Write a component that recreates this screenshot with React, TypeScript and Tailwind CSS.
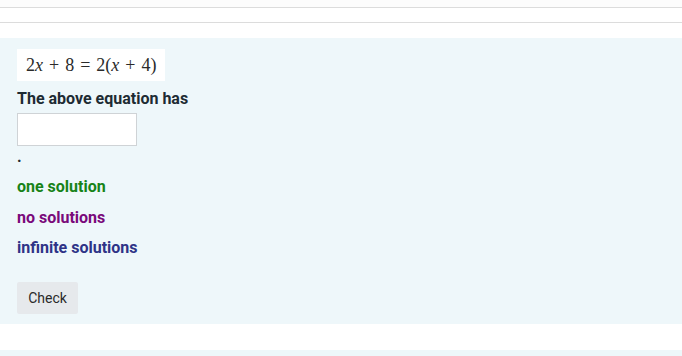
export default function App() {
  const op = "mx-[6px]";
  return (
    <div className="w-[682px] h-[356px] overflow-hidden bg-white" style={{ fontFamily: "Roboto, 'Liberation Sans', sans-serif" }}>
      <div className="h-[7px] bg-[#fcfcfc]" />
      <div className="h-px bg-[#dcdcdc]" />
      <div className="h-[14px] bg-white" />
      <div className="h-px bg-[#dcdcdc]" />
      <div className="h-[15px] bg-white" />
      <div className="h-[286px] bg-[#eef7fa] pl-[17px] pt-[11px] flex flex-col items-start">
        <div className="bg-white h-[32px] w-[148px] flex items-center pl-[9px] text-[18px] text-[#2a2a2a]" style={{ fontFamily: "'Liberation Serif', 'DejaVu Serif', serif" }}>
          <span>2<i>x</i></span>
          <span className={op}>+</span>
          <span>8</span>
          <span className={op}>=</span>
          <span>2(<i>x</i></span>
          <span className={op}>+</span>
          <span>4)</span>
        </div>
        <div className="mt-[9px] text-[16px] leading-[18px] font-bold text-[#1d2b33]">The above equation has</div>
        <div className="mt-[5px] w-[120px] h-[33px] bg-white border border-[#cfd3d6]" />
        <div className="text-[16px] leading-[18px] font-bold text-[#1d2b33] mt-[2px]">.</div>
        <div className="mt-[12px] text-[16px] leading-[18px] font-bold text-[#178317]">one solution</div>
        <div className="mt-[13px] text-[16px] leading-[18px] font-bold text-[#7a0a7a]">no solutions</div>
        <div className="mt-[12px] text-[16px] leading-[18px] font-bold text-[#2e3387]">infinite solutions</div>
        <button className="mt-[25px] h-[32px] w-[61px] bg-[#e6e9ec] rounded-[2px] text-[14px] text-[#2a2a2a]">Check</button>
      </div>
      <div className="h-[26px] bg-white" />
      <div className="h-[10px] bg-[#eef7fa]" />
    </div>
  );
}
